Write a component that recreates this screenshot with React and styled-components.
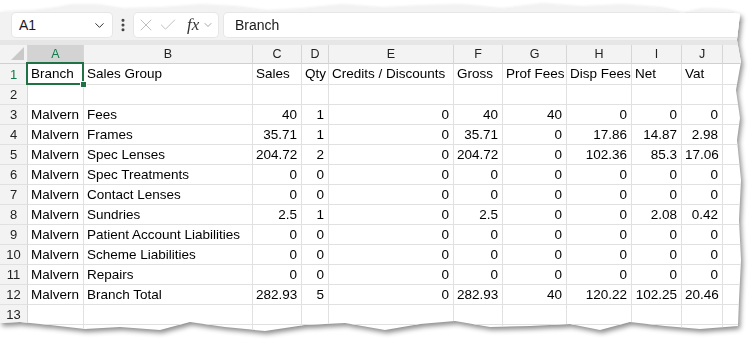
import React from "react";
import styled, { createGlobalStyle } from "styled-components";
import { ChevronDown, X, Check, EllipsisVertical } from "lucide-react";

const GlobalStyle = createGlobalStyle`
  html, body {
    margin: 0;
    padding: 0;
    background: #ffffff;
  }
  body {
    font-family: "Liberation Sans", Arial, sans-serif;
    color: #000;
  }
`;

const COLS = "28px 56px 169px 49px 27px 125px 49px 64px 65px 50px 41px 60px";
const LETTERS = ["A", "B", "C", "D", "E", "F", "G", "H", "I", "J", ""];

const ROWS = [
  ["Branch", "Sales Group", "Sales", "Qty", "Credits / Discounts", "Gross", "Prof Fees", "Disp Fees", "Net", "Vat"],
  [],
  ["Malvern", "Fees", 40, 1, 0, 40, 40, 0, 0, 0],
  ["Malvern", "Frames", 35.71, 1, 0, 35.71, 0, 17.86, 14.87, 2.98],
  ["Malvern", "Spec Lenses", 204.72, 2, 0, 204.72, 0, 102.36, 85.3, 17.06],
  ["Malvern", "Spec Treatments", 0, 0, 0, 0, 0, 0, 0, 0],
  ["Malvern", "Contact Lenses", 0, 0, 0, 0, 0, 0, 0, 0],
  ["Malvern", "Sundries", 2.5, 1, 0, 2.5, 0, 0, 2.08, 0.42],
  ["Malvern", "Patient Account Liabilities", 0, 0, 0, 0, 0, 0, 0, 0],
  ["Malvern", "Scheme Liabilities", 0, 0, 0, 0, 0, 0, 0, 0],
  ["Malvern", "Repairs", 0, 0, 0, 0, 0, 0, 0, 0],
  ["Malvern", "Branch Total", 282.93, 5, 0, 282.93, 40, 120.22, 102.25, 20.46],
  [],
  null,
];

const TORN = `polygon(
  0 12px, 30px 11px, 55px 8px, 70px 5px, 95px 5px, 120px 9px, 160px 8px, 200px 5px,
  235px 7px, 265px 11px, 300px 9px, 340px 5px, 380px 8px, 420px 6px, 460px 5px,
  500px 9px, 540px 4px, 580px 7px, 620px 5px, 660px 8px, 682px 13px, 700px 9px, 725px 10px,
  740px 14px, 737px 40px, 741px 62px, 736px 90px, 740px 118px, 737px 140px, 741px 180px,
  739px 220px, 741px 260px, 739px 300px, 738px 326px,
  700px 329px, 665px 326px, 630px 322px, 600px 330px, 570px 324px, 530px 326px,
  490px 327px, 455px 321px, 420px 324px, 385px 330px, 345px 323px, 305px 325px,
  265px 331px, 225px 327px, 190px 322px, 160px 330px, 120px 327px, 85px 329px,
  50px 325px, 20px 322px, 0 323px
)`;

const Stage = styled.div`
  width: 756px;
  height: 344px;
  overflow: hidden;
`;

const Shadow = styled.div`
  filter: drop-shadow(2px 3px 2.5px rgba(0, 0, 0, 0.45));
`;

const Paper = styled.div`
  width: 745px;
  height: 336px;
  background: #ffffff;
  clip-path: ${TORN};
  overflow: hidden;
`;

const Toolbar = styled.div`
  height: 40px;
  box-sizing: border-box;
  padding: 13px 0 3px 12px;
  background: #f2f2f2;
  display: flex;
  align-items: stretch;
`;

const Box = styled.div`
  background: #ffffff;
  border-radius: 4px;
  box-shadow: 0 0 0 1px #e6e6e6;
  display: flex;
  align-items: center;
  box-sizing: border-box;
`;

const NameBox = styled(Box)`
  width: 100px;
  padding: 0 5px 0 7px;
  justify-content: space-between;
  font-size: 14px;
  color: #1a1a1a;
`;

const Kebab = styled.div`
  width: 22px;
  display: flex;
  align-items: center;
  justify-content: center;
  color: #444;
`;

const FxBox = styled(Box)`
  width: 84px;
  padding: 0 3px 0 2px;
  gap: 2px;
  color: #b9b9b9;
`;

const Fx = styled.span`
  font-family: "Liberation Serif", "Times New Roman", serif;
  font-style: italic;
  font-size: 17px;
  color: #333;
  margin: 0 1px 0 7px;
`;

const FormulaBox = styled(Box)`
  flex: 1;
  margin-left: 6px;
  padding-left: 11px;
  font-size: 14px;
  color: #1a1a1a;
  border-radius: 4px 0 0 4px;
`;

const Divider = styled.div`
  height: 5px;
  background: #e6e6e6;
`;

const Row = styled.div`
  display: grid;
  grid-template-columns: ${COLS};
  height: ${(p) => p.$h}px;
`;

const Cell = styled.div`
  position: relative;
  box-sizing: border-box;
  border-right: 1px solid #e1e1e1;
  border-bottom: 1px solid #e1e1e1;
  font-size: 13.5px;
  line-height: ${(p) => p.$h - 1}px;
  padding: 0 3px 0 3px;
  white-space: nowrap;
  text-align: ${(p) => (p.$num ? "right" : "left")};
  padding-right: ${(p) => (p.$num ? "4px" : "3px")};
`;

const ColHead = styled.div`
  box-sizing: border-box;
  background: ${(p) => (p.$active ? "#d3d3d3" : "#f3f3f3")};
  color: ${(p) => (p.$active ? "#137a4a" : "#222")};
  border-right: 1px solid #d6d6d6;
  border-bottom: 1px solid #d0d0d0;
  font-size: 12.5px;
  display: flex;
  align-items: center;
  justify-content: center;
`;

const Corner = styled(ColHead)`
  position: relative;
  &::after {
    content: "";
    position: absolute;
    right: 3px;
    bottom: 3px;
    width: 0;
    height: 0;
    border-left: 13px solid transparent;
    border-bottom: 13px solid #c9c9c9;
  }
`;

const RowHead = styled.div`
  box-sizing: border-box;
  background: #f3f3f3;
  color: ${(p) => (p.$active ? "#137a4a" : "#222")};
  border-right: 1px solid #d6d6d6;
  border-bottom: 1px solid #e1e1e1;
  font-size: 13px;
  display: flex;
  align-items: center;
  justify-content: center;
`;

const Selected = styled(Cell)`
  &::after {
    content: "";
    position: absolute;
    left: -2px;
    top: -2px;
    right: -1px;
    bottom: -1px;
    border: 2px solid #1f7244;
  }
  &::before {
    content: "";
    position: absolute;
    right: -4px;
    bottom: -4px;
    width: 5px;
    height: 5px;
    background: #1f7244;
    border: 1px solid #fff;
    z-index: 2;
  }
`;

export default function App() {
  return (
    <Stage>
      <GlobalStyle />
      <Shadow>
        <Paper>
          <Toolbar>
            <NameBox>
              <span>A1</span>
              <ChevronDown size={15} strokeWidth={1.6} color="#333" />
            </NameBox>
            <Kebab>
              <EllipsisVertical size={16} strokeWidth={2.6} />
            </Kebab>
            <FxBox>
              <X size={20} strokeWidth={1.1} />
              <Check size={20} strokeWidth={1.1} />
              <Fx>fx</Fx>
              <ChevronDown size={12} strokeWidth={1.5} color="#888" />
            </FxBox>
            <FormulaBox>Branch</FormulaBox>
          </Toolbar>
          <Divider />
          <Row $h={19}>
            <Corner />
            {LETTERS.map((l, i) => (
              <ColHead key={i} $active={i === 0}>
                {l}
              </ColHead>
            ))}
          </Row>
          {ROWS.map((r, ri) => {
            const h = ri === 0 ? 21 : 20;
            const cells = r || [];
            return (
              <Row key={ri} $h={h}>
                <RowHead $active={ri === 0}>{r ? ri + 1 : ""}</RowHead>
                {LETTERS.map((l, ci) => {
                  const v = cells[ci];
                  const num = typeof v === "number";
                  const C = ri === 0 && ci === 0 ? Selected : Cell;
                  return (
                    <C key={ci} $h={h} $num={num}>
                      {v}
                    </C>
                  );
                })}
              </Row>
            );
          })}
        </Paper>
      </Shadow>
    </Stage>
  );
}
